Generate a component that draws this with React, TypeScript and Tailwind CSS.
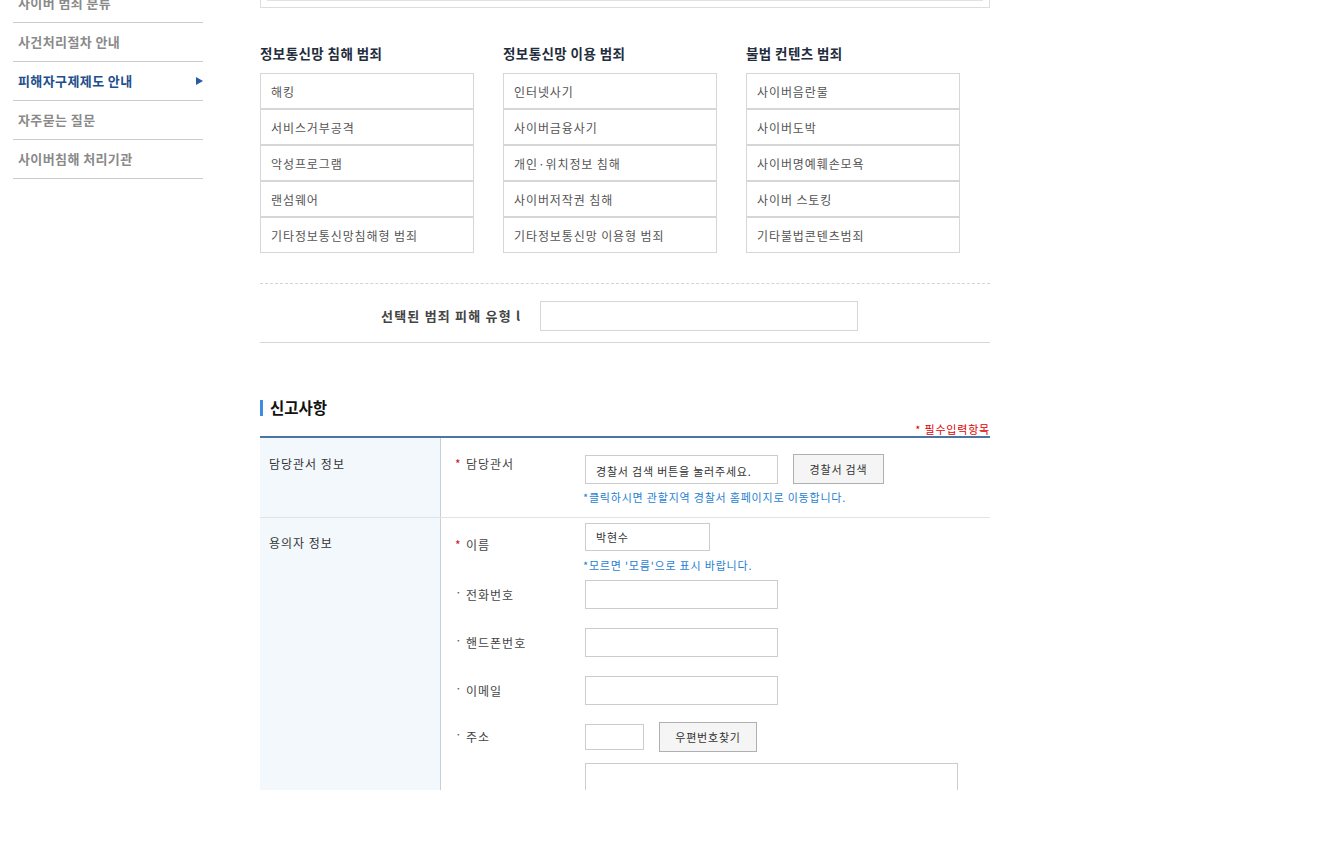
import React from "react";

const font = { fontFamily: '"Noto Sans CJK KR", "Noto Sans", sans-serif' };

const sideItems = [
  { label: "사이버 범죄 분류", active: false },
  { label: "사건처리절차 안내", active: false },
  { label: "피해자구제제도 안내", active: true },
  { label: "자주묻는 질문", active: false },
  { label: "사이버침해 처리기관", active: false },
];

const categories = [
  {
    title: "정보통신망 침해 범죄",
    items: ["해킹", "서비스거부공격", "악성프로그램", "랜섬웨어", "기타정보통신망침해형 범죄"],
  },
  {
    title: "정보통신망 이용 범죄",
    items: ["인터넷사기", "사이버금융사기", "개인·위치정보 침해", "사이버저작권 침해", "기타정보통신망 이용형 범죄"],
  },
  {
    title: "불법 컨텐츠 범죄",
    items: ["사이버음란물", "사이버도박", "사이버명예훼손모욕", "사이버 스토킹", "기타불법콘텐츠범죄"],
  },
];

function Label({ text, required }: { text: string; required?: boolean }) {
  return (
    <div className="flex items-center text-[12px] leading-[18px] text-[#444] tracking-[1px]">
      {required ? (
        <span className="w-[11px] text-[#d0121b] tracking-normal">*</span>
      ) : (
        <span className="w-[11px] text-[#555] relative -top-[3px] tracking-normal">·</span>
      )}
      <span>{text}</span>
    </div>
  );
}

export default function App() {
  return (
    <div className="h-[790px] overflow-hidden bg-white" style={font}>
      <div className="flex pl-[13px]">
        {/* Sidebar */}
        <div className="w-[190px] shrink-0 -mt-[16px]">
          {sideItems.map((it) => (
            <div
              key={it.label}
              className="h-[39px] border-b border-[#cccccc] flex items-center justify-between pl-[5px]"
            >
              <span
                className={
                  "text-[13px] font-bold tracking-[0.4px] " +
                  (it.active ? "text-[#1d4f8c]" : "text-[#8a8a8a]")
                }
              >
                {it.label}
              </span>
              {it.active && (
                <svg width="7" height="8" viewBox="0 0 7 8">
                  <path d="M0 0 L7 4 L0 8 Z" fill="#2a5aa5" />
                </svg>
              )}
            </div>
          ))}
        </div>

        {/* Main */}
        <div className="ml-[57px] w-[730px] shrink-0">
          <div className="-mt-[20px] h-[28px] border border-[#dddddd] px-[6px] pb-[6px]">
            <div className="h-full border-x border-b border-[#e2e2e2] bg-[#f8f8f8]" />
          </div>

          {/* Categories */}
          <div className="mt-[35px] flex gap-[29px]">
            {categories.map((c) => (
              <div key={c.title} className="w-[214px]">
                <div className="h-[20px] leading-[20px] text-[13.5px] font-bold text-[#1f2d3d] tracking-[0.4px]">
                  {c.title}
                </div>
                <div className="mt-[10px]">
                  {c.items.map((item) => (
                    <div
                      key={item}
                      className="h-[36px] border border-[#d6d6d6] flex items-center pl-[10px] pt-[2px] text-[12px] tracking-[0.9px] text-[#555]"
                    >
                      {item}
                    </div>
                  ))}
                </div>
              </div>
            ))}
          </div>

          {/* Selected type */}
          <div className="mt-[30px] border-t border-dashed border-[#d4d4d4]">
            <div className="pt-[17px] pb-[11px] pl-[121px] flex items-center border-b border-[#d6d6d6]">
              <span className="text-[13px] font-bold text-[#444] w-[159px] tracking-[1.2px] whitespace-nowrap">
                선택된 범죄 피해 유형 l
              </span>
              <div className="w-[318px] h-[30px] border border-[#d6d6d6]" />
            </div>
          </div>

          {/* 신고사항 */}
          <div className="mt-[55px] flex items-center h-[20px]">
            <span className="w-[3px] h-[16px] bg-[#3d8de0]" />
            <span className="ml-[7px] text-[15.5px] font-bold text-[#111] tracking-[0px]">신고사항</span>
          </div>
          <div className="mt-[4px] text-right text-[11px] leading-[14px] text-[#e00000] tracking-[0.8px]">* 필수입력항목</div>

          {/* Table */}
          <div className="border-t-2 border-[#4a76a6]">
            {/* Row 1 */}
            <div className="flex border-b border-[#e3e3e3]">
              <div className="w-[181px] shrink-0 bg-[#f3f8fd] border-r border-[#c7cfd9] pl-[9px] pt-[17px] text-[12px] leading-[18px] text-[#333] tracking-[1px]">
                담당관서 정보
              </div>
              <div className="pl-[14px] pt-[17px] pb-[13px]">
                <div className="flex items-start">
                  <div className="w-[130px]">
                    <Label text="담당관서" required />
                  </div>
                  <div className="w-[193px] h-[29px] border border-[#cccccc] pl-[10px] pt-[8px] text-[11px] leading-[14px] text-[#333] tracking-[0.8px] whitespace-nowrap">
                    경찰서 검색 버튼을 눌러주세요.
                  </div>
                  <button className="ml-[15px] -mt-[1px] w-[91px] h-[30px] border border-[#b0b0b0] bg-[#f5f5f5] text-[11px] text-[#333] tracking-[0.8px]">
                    경찰서 검색
                  </button>
                </div>
                <div className="mt-[6px] ml-[128px] text-[11px] leading-[14px] text-[#1f7fd2] tracking-[0.8px] whitespace-nowrap">
                  *클릭하시면 관할지역 경찰서 홈페이지로 이동합니다.
                </div>
              </div>
            </div>

            {/* Row 2 */}
            <div className="flex">
              <div className="w-[181px] shrink-0 bg-[#f3f8fd] border-r border-[#c7cfd9] pl-[9px] pt-[16px] text-[12px] leading-[18px] text-[#333] min-h-[400px] tracking-[1px]">
                용의자 정보
              </div>
              <div className="pl-[14px] pt-[5px]">
                <div className="flex items-start">
                  <div className="w-[130px] pt-[13px]">
                    <Label text="이름" required />
                  </div>
                  <div className="w-[125px] h-[28px] border border-[#cccccc] pl-[10px] flex items-center text-[11px] text-[#333] tracking-[0.8px]">
                    박현수
                  </div>
                </div>
                <div className="mt-[4px] ml-[128px] text-[11px] leading-[14px] text-[#1f7fd2] tracking-[0.8px] whitespace-nowrap">
                  *모르면 '모름'으로 표시 바랍니다.
                </div>

                <div className="mt-[8px] flex items-center">
                  <div className="w-[130px]">
                    <Label text="전화번호" />
                  </div>
                  <div className="w-[193px] h-[29px] border border-[#cccccc]" />
                </div>
                <div className="mt-[19px] flex items-center">
                  <div className="w-[130px]">
                    <Label text="핸드폰번호" />
                  </div>
                  <div className="w-[193px] h-[29px] border border-[#cccccc]" />
                </div>
                <div className="mt-[19px] flex items-center">
                  <div className="w-[130px]">
                    <Label text="이메일" />
                  </div>
                  <div className="w-[193px] h-[29px] border border-[#cccccc]" />
                </div>
                <div className="mt-[17px] flex items-center">
                  <div className="w-[130px]">
                    <Label text="주소" />
                  </div>
                  <div className="w-[59px] h-[26px] border border-[#cccccc]" />
                  <button className="ml-[15px] w-[98px] h-[30px] border border-[#b0b0b0] bg-[#f5f5f5] text-[11px] text-[#333] tracking-[0.8px]">
                    우편번호찾기
                  </button>
                </div>
                <div className="mt-[11px] ml-[130px] w-[373px] h-[80px] border border-[#cccccc]" />
              </div>
            </div>
          </div>
        </div>
      </div>
    </div>
  );
}
